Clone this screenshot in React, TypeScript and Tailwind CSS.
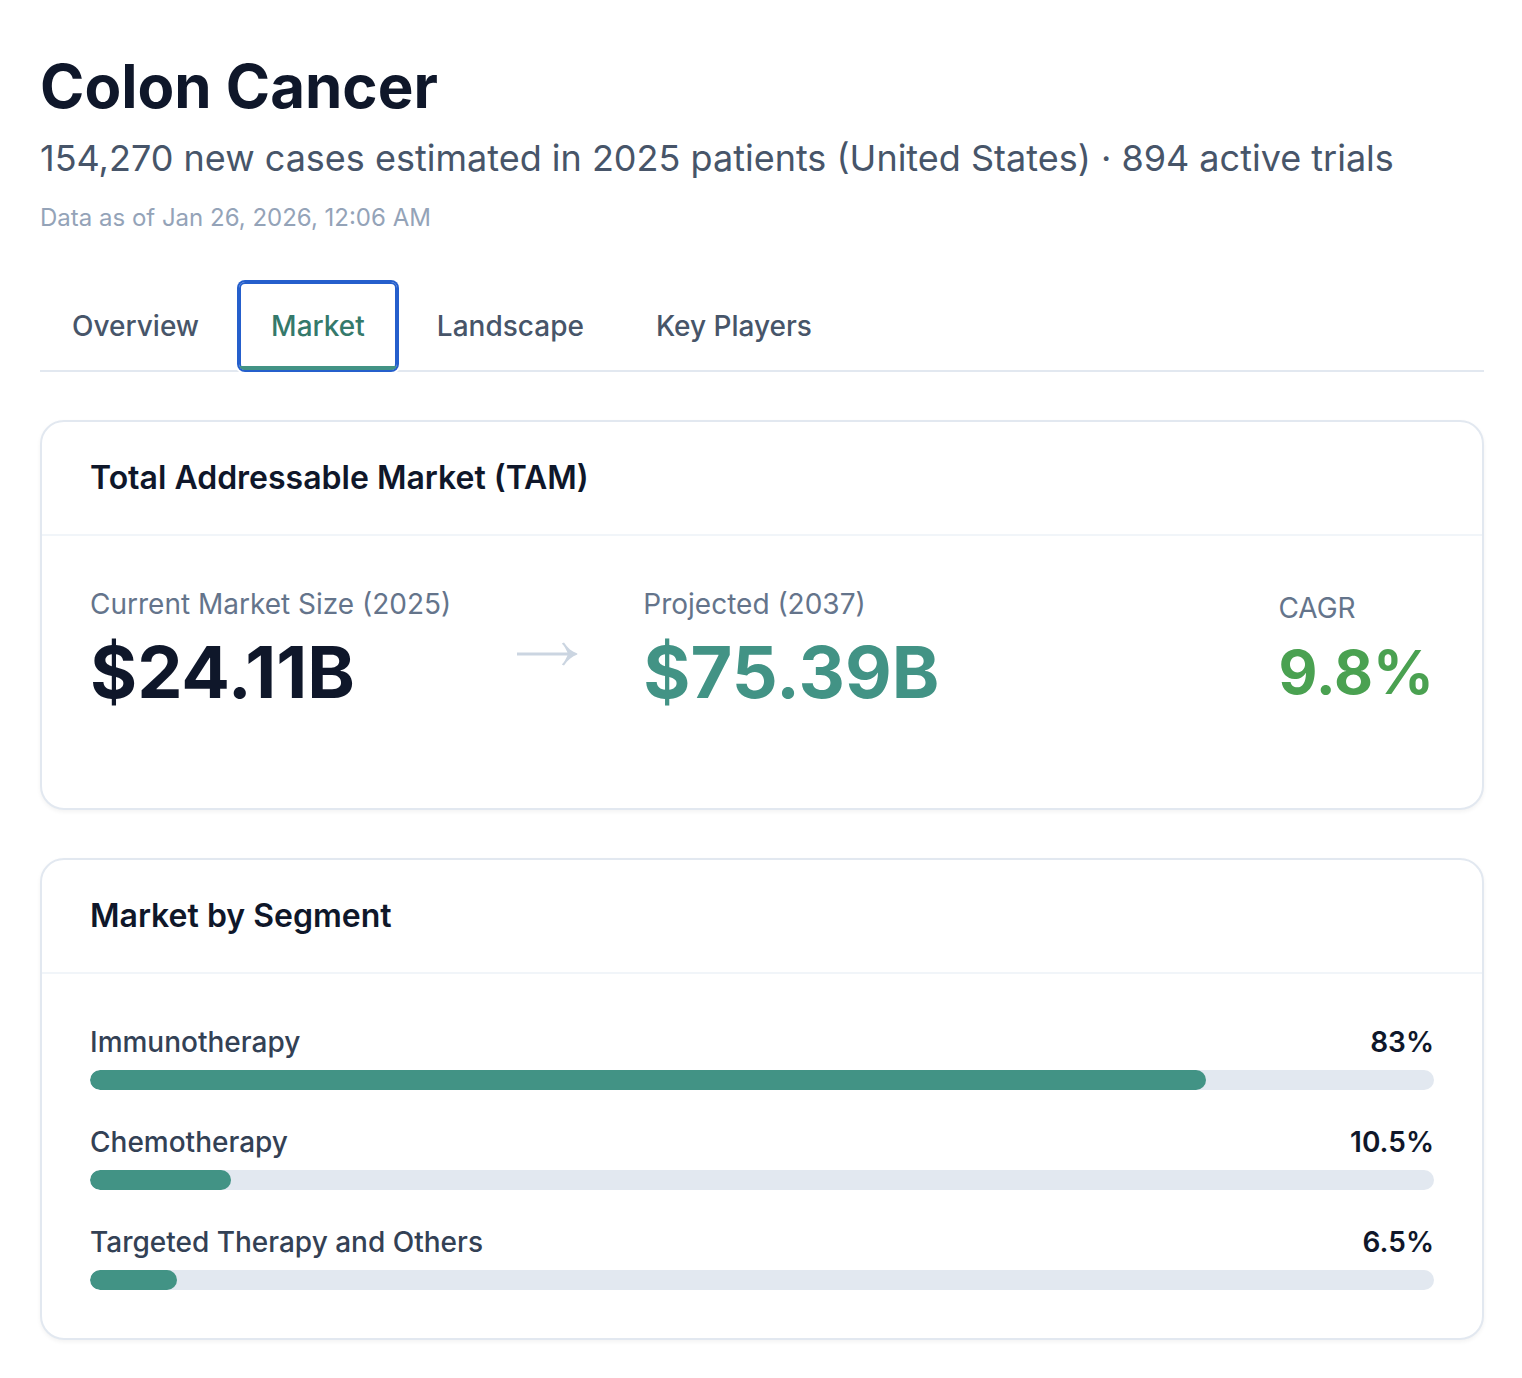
const tabs = ["Overview", "Market", "Landscape", "Key Players"];
const activeTab = "Market";

const segments = [
  { name: "Immunotherapy", share: 83 },
  { name: "Chemotherapy", share: 10.5 },
  { name: "Targeted Therapy and Others", share: 6.5 },
];

function Card({ title, children }: { title: string; children: React.ReactNode }) {
  return (
    <section className="rounded-3xl border-2 border-[#e2e8f0] bg-white shadow-[0_2px_4px_rgba(0,0,0,0.05)]">
      <div className="border-b-2 border-[#f1f5f9] px-12 py-8">
        <h2 className="text-[32px] leading-12 font-semibold text-[#0f172a]">{title}</h2>
      </div>
      {children}
    </section>
  );
}

function ArrowRight() {
  return (
    <svg viewBox="0 0 64 40" className="w-16 shrink-0 fill-[#cbd5e1]" aria-hidden="true">
      <path d="M2 22.500H52.500C51 19.500 49.500 16 46.800 13.500L49 12.500C52.500 18 57 21.700 62.300 23.600V24.400C57 26.300 52.500 30 49 35.500L46.800 34.500C49.500 32 51 28.500 52.500 25.500H2Z" />
    </svg>
  );
}

export default function App() {
  return (
    <main className="bg-white pt-12 pr-[38px] pb-10 pl-10 font-['Inter',sans-serif]">
      <header>
        <h1 className="text-[60px] leading-[76px] font-bold text-[#0f172a]">Colon Cancer</h1>
        <p className="mt-2 text-[36px] leading-[52px] text-[#475569]">
          154,270 new cases estimated in 2025 patients (United States) · 894 active trials
        </p>
        <p className="mt-3.5 text-2xl leading-10 text-[#94a3b8]">Data as of Jan 26, 2026, 12:06 AM</p>
      </header>

      <div role="tablist" className="mt-11 flex gap-2 border-b-2 border-[#e2e8f0]">
        {tabs.map((tab) =>
          tab === activeTab ? (
            <button
              key={tab}
              type="button"
              role="tab"
              aria-selected="true"
              className="relative overflow-hidden rounded-md px-8 py-6 text-[28px] leading-10 font-medium text-[#35796b] shadow-[inset_0_0_0_2px_#255fcc,0_0_0_2px_#255fcc,0_0_0_4px_#fff]"
            >
              {tab}
              <span className="absolute inset-x-0 bottom-0 h-1 bg-[#429385]" />
            </button>
          ) : (
            <button
              key={tab}
              type="button"
              role="tab"
              aria-selected="false"
              className="px-8 py-6 text-[28px] leading-10 font-medium text-[#475569]"
            >
              {tab}
            </button>
          ),
        )}
      </div>

      <div className="mt-12 flex flex-col gap-12">
        <Card title="Total Addressable Market (TAM)">
          <div className="flex items-center justify-between px-12 pt-12 pb-[92px]">
            <div className="flex items-center gap-16">
              <div>
                <p className="text-[28px] leading-10 text-[#64748b]">Current Market Size (2025)</p>
                <p className="mt-1 text-[72px] leading-[88px] font-bold text-[#0f172a]">$24.11B</p>
              </div>
              <ArrowRight />
              <div>
                <p className="text-[28px] leading-10 text-[#64748b]">Projected (2037)</p>
                <p className="mt-1 text-[72px] leading-[88px] font-bold text-[#429385]">$75.39B</p>
              </div>
            </div>
            <div>
              <p className="text-[28px] leading-10 text-[#64748b]">CAGR</p>
              <p className="mt-1 text-[60px] leading-20 font-bold text-[#4aa151]">9.8%</p>
            </div>
          </div>
        </Card>

        <Card title="Market by Segment">
          <ul className="flex flex-col gap-8 p-12">
            {segments.map(({ name, share }) => (
              <li key={name}>
                <div className="flex justify-between text-[28px] leading-10">
                  <span className="font-medium text-[#334155]">{name}</span>
                  <span className="font-semibold text-[#0f172a]">{share}%</span>
                </div>
                <div className="mt-2 h-5 overflow-hidden rounded-full bg-[#e2e8f0]">
                  <div className="h-full rounded-full bg-[#429385]" style={{ width: `${share}%` }} />
                </div>
              </li>
            ))}
          </ul>
        </Card>
      </div>
    </main>
  );
}
